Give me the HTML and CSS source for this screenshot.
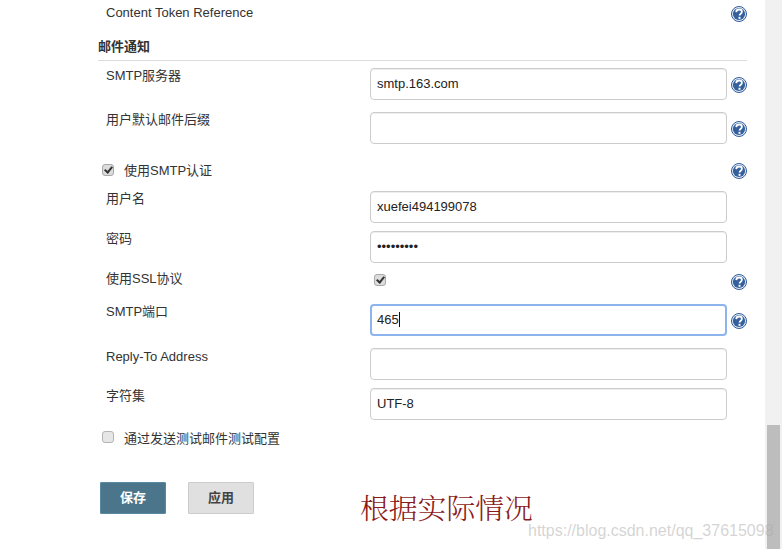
FILE: index.html
```html
<!DOCTYPE html>
<html lang="zh">
<head>
<meta charset="utf-8">
<title>邮件通知</title>
<link rel="stylesheet" href="styles.css">
</head>
<body>
<svg class="defs" width="0" height="0" aria-hidden="true">
  <symbol id="help" viewBox="0 0 16 16">
    <circle cx="8" cy="8" r="7.5" fill="#e8eef7" stroke="#2f5b9b" stroke-width="1"/>
    <circle cx="8" cy="8" r="6.1" fill="#34609c"/>
    <path d="M5.2 6.1c.1-1.7 1.2-2.6 2.9-2.6s2.8.9 2.8 2.3c0 1.1-.7 1.6-1.4 2.1-.6.4-.9.8-.9 1.7" fill="none" stroke="#fff" stroke-width="1.8"/>
    <rect x="7.5" y="10.8" width="2" height="2" fill="#fff"/>
  </symbol>
</svg>
<main class="page">
  <div class="form">
    <div class="row row-top">
      <span class="label">Content Token Reference</span>
      <span></span>
      <svg class="help"><use href="#help"/></svg>
    </div>
    <h2 class="section">邮件通知</h2>
    <div class="row row-input gap-12">
      <label class="label label-cjk">SMTP服务器</label>
      <input class="field" type="text" value="smtp.163.com">
      <svg class="help"><use href="#help"/></svg>
    </div>
    <div class="row row-input gap-18">
      <label class="label label-cjk">用户默认邮件后缀</label>
      <input class="field" type="text">
      <svg class="help"><use href="#help"/></svg>
    </div>
    <div class="row row-check gap-12">
      <label class="check-label"><input class="check" type="checkbox" checked><span>使用SMTP认证</span></label>
      <span></span>
      <svg class="help"><use href="#help"/></svg>
    </div>
    <div class="row row-input gap-8">
      <label class="label label-cjk">用户名</label>
      <input class="field" type="text" value="xuefei494199078">
      <span></span>
    </div>
    <div class="row row-input gap-8">
      <label class="label label-cjk">密码</label>
      <input class="field" type="password" value="123456789">
      <span></span>
    </div>
    <div class="row row-ssl gap-10">
      <label class="label label-cjk">使用SSL协议</label>
      <span class="ssl-cell"><input class="check" type="checkbox" checked></span>
      <svg class="help"><use href="#help"/></svg>
    </div>
    <div class="row row-input gap-12">
      <label class="label label-cjk">SMTP端口</label>
      <div class="field field-focus">465<i class="caret"></i></div>
      <svg class="help"><use href="#help"/></svg>
    </div>
    <div class="row row-input gap-8">
      <label class="label">Reply-To Address</label>
      <input class="field" type="text">
      <span></span>
    </div>
    <div class="row row-input">
      <label class="label label-cjk">字符集</label>
      <input class="field" type="text" value="UTF-8">
      <span></span>
    </div>
    <div class="row-test">
      <label class="check-label"><input class="check check-tight" type="checkbox"><span>通过发送测试邮件测试配置</span></label>
    </div>
    <div class="buttons">
      <button class="btn btn-primary" type="button">保存</button>
      <button class="btn" type="button">应用</button>
    </div>
  </div>
</main>
<div class="scrollbar"><div class="thumb"></div></div>
<div class="note">根据实际情况</div>
<div class="watermark">https://blog.csdn.net/qq_37615098</div>
</body>
</html>
```

FILE: styles.css
```css
html, body {
  margin: 0;
  height: 549px;
  overflow: hidden;
  background: #fff;
}
body {
  position: relative;
  font-family: "Liberation Sans", "Noto Sans CJK SC", sans-serif;
  font-size: 13px;
  color: #333;
}
.defs { position: absolute; }
.page {
  width: 765px;
  height: 549px;
  box-sizing: border-box;
  padding-left: 98px;
}
.form { width: 649px; }
.row {
  display: grid;
  grid-template-columns: 272px 357px 20px;
  align-items: start;
}
.row-top { height: 22px; padding-top: 4px; }
.label {
  display: block;
  padding-left: 8px;
  line-height: 18px;
}
.label-cjk { margin-top: -1px; }
.help {
  display: block;
  width: 16px;
  height: 16px;
  margin-left: 4px;
  margin-top: 9px;
}
.row-top .help { margin-top: 2px; }
.section {
  margin: 0 0 7px;
  height: 35px;
  box-sizing: border-box;
  padding-top: 12px;
  border-bottom: 1px solid #ddd;
  font-size: 13px;
  line-height: 18px;
  font-weight: bold;
  color: #333;
}
.row-input { height: 32px; }
.gap-8 { margin-bottom: 8px; }
.gap-10 { margin-bottom: 10px; }
.gap-12 { margin-bottom: 12px; }
.gap-18 { margin-bottom: 18px; }
.field {
  display: block;
  width: 357px;
  height: 32px;
  box-sizing: border-box;
  margin: 0;
  padding: 0 6px 2px;
  border: 1px solid #ccc;
  border-radius: 4px;
  box-shadow: inset 0 1px 1px rgba(0, 0, 0, .075);
  background: #fff;
  font: 13px "Liberation Sans", sans-serif;
  color: #222;
  outline: 0;
}
.field-focus {
  display: flex;
  align-items: center;
  border: 2px solid #8db4ef;
  padding-left: 5px;
  box-shadow: none;
}
.caret {
  display: block;
  width: 1px;
  height: 15px;
  background: #111;
}
.row-check { height: 17px; }
.row-check .help { margin-top: 1px; }
.check-label {
  display: flex;
  align-items: flex-start;
  padding-left: 4px;
  line-height: 18px;
}
.check {
  appearance: none;
  -webkit-appearance: none;
  position: relative;
  display: block;
  box-sizing: border-box;
  width: 12px;
  height: 12px;
  margin: 2px 10px 0 0;
  border: 1px solid #b4b4b4;
  border-radius: 3px;
  background: #e6e6e6;
}
.check-tight { margin-top: 1px; }
.check:checked { background: #dcdcdc; border-color: #a8a8a8; }
.check:checked::after {
  content: "";
  position: absolute;
  left: 3px;
  top: 0;
  width: 3px;
  height: 6px;
  border: solid #333;
  border-width: 0 2px 2px 0;
  transform: rotate(40deg);
}
.row-ssl { height: 23px; }
.row-ssl .help { margin-top: 3px; }
.ssl-cell { display: block; padding: 1px 0 0 4px; }
.row-test { margin-top: 10px; height: 52px; }
.buttons {
  display: flex;
  gap: 22px;
  margin-left: 2px;
}
.btn {
  width: 66px;
  height: 32px;
  padding: 0 0 3px;
  border: 1px solid #ccc;
  border-radius: 1px;
  background: #e0e0e0;
  font: bold 13px "Liberation Sans", "Noto Sans CJK SC", sans-serif;
  color: #444;
}
.btn-primary {
  background: #4b758b;
  border-color: #5a8aa3;
  color: #fff;
}
.scrollbar {
  position: absolute;
  top: 0;
  right: 0;
  width: 17px;
  height: 549px;
  background: #f1f1f1;
}
.thumb {
  position: absolute;
  left: 2px;
  right: 2px;
  top: 425px;
  bottom: 0;
  background: #bdbdbd;
}
.note {
  position: absolute;
  left: 360px;
  top: 487px;
  font-family: "Noto Serif CJK SC", "Noto Sans CJK SC", sans-serif;
  font-size: 28.8px;
  font-weight: 300;
  line-height: 40px;
  color: #8b1a1a;
  white-space: nowrap;
}
.watermark {
  position: absolute;
  left: 528px;
  top: 521px;
  font-size: 16px;
  line-height: 20px;
  color: rgba(170, 170, 170, .5);
  white-space: nowrap;
}
```
